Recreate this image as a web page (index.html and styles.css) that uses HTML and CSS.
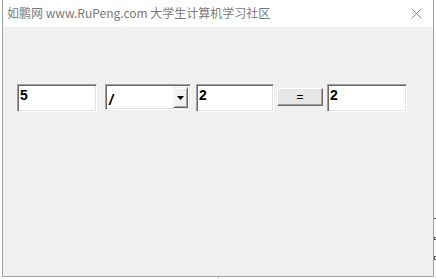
FILE: index.html
```html
<!DOCTYPE html>
<html lang="zh-CN">
<head>
    <meta charset="UTF-8">
    <meta name="viewport" content="width=device-width, initial-scale=1.0">
    <title>计算器</title>

    <link rel="stylesheet" href="styles.css">
</head>
<body>
    <div class="window">
        <div class="titlebar">
            <span class="title">如鹏网 www.RuPeng.com 大学生计算机学习社区</span>
            <span class="close">
                <svg width="11" height="11" viewBox="0 0 11 11">
                    <path d="M0.5 0.5 L10.5 10.5 M10.5 0.5 L0.5 10.5" stroke="#8a8a8a" stroke-width="1" fill="none"/>
                </svg>
            </span>
        </div>
        <div class="client">
            <div class="calc-row">
                <input class="textbox" id="num1" type="text" value="5">
                <div class="combo" id="op">
                    <span class="combo-text">/</span>
                    <span class="combo-btn">
                        <svg width="7" height="4" viewBox="0 0 7 4"><path d="M0 0 H7 L3.5 4 Z" fill="#000"/></svg>
                    </span>
                </div>
                <input class="textbox box3" id="num2" type="text" value="2">
                <button class="btn" id="calc">=</button>
                <input class="textbox box4" id="result" type="text" value="2">
            </div>
        </div>
    </div>

    <!-- bits of the desktop peeking out behind the window -->
    <span class="bit bit1"></span>
    <span class="bit bit2"></span>
    <span class="bit bit3"></span>
    <span class="bit bit4"></span>
</body>
</html>
```

FILE: styles.css
```css
*{
    margin: 0;
    padding: 0;
    box-sizing: border-box;
}
body{
    width: 436px;
    height: 279px;
    overflow: hidden;
    background-color: #ffffff;
    position: relative;
}
.window{
    margin-left: 2px;
    width: 432px;
    height: 277px;
    border: 1px solid #a0a0a0;
    border-top: none;
    background-color: #f0f0f0;
    display: flex;
    flex-direction: column;
}
.titlebar{
    height: 27px;
    background-color: #ffffff;
    display: flex;
    align-items: center;
    justify-content: space-between;
    padding: 0 11px 2px 4px;
}
.title{
    font-family: "Noto Sans CJK SC", "Noto Sans", sans-serif;
    font-size: 12px;
    color: #7a7a7a;
}
.close{
    display: flex;
    margin-top: 2px;
}
.client{
    flex: 1;
    padding: 57px 0 0 14px;
}
.calc-row{
    display: flex;
    align-items: flex-start;
}
.textbox{
    width: 80px;
    height: 28px;
    border: 1px solid;
    border-color: #a0a0a0 #ffffff #ffffff #a0a0a0;
    box-shadow: inset 1px 1px #696969, inset -1px -1px #e3e3e3;
    background-color: #ffffff;
    padding: 0 1px 6px 2px;
    font-family: "Liberation Sans", Arial, sans-serif;
    font-weight: bold;
    font-size: 14px;
    color: #000;
    outline: none;
}
.combo{
    width: 86px;
    height: 26px;
    margin-left: 8px;
    border: 1px solid;
    border-color: #a0a0a0 #ffffff #ffffff #a0a0a0;
    box-shadow: inset 1px 1px #696969, inset -1px -1px #e3e3e3;
    background-color: #ffffff;
    padding: 2px 2px 1px 3px;
    display: flex;
    justify-content: space-between;
}
.combo-text{
    font-family: "Liberation Sans", Arial, sans-serif;
    font-weight: bold;
    font-style: italic;
    font-size: 15px;
    line-height: 24px;
    padding-top: 1px;
}
.combo-btn{
    width: 15px;
    height: 21px;
    background-color: #f0f0f0;
    border: 1px solid;
    border-color: #f0f0f0 #696969 #696969 #f0f0f0;
    box-shadow: inset 1px 1px #ffffff, inset -1px -1px #a0a0a0;
    display: flex;
    align-items: center;
    justify-content: center;
}
.box3{
    width: 78px;
    margin-left: 5px;
}
.btn{
    width: 46px;
    height: 18px;
    margin: 4px 0 0 3px;
    background-color: #e6e6e6;
    border: 1px solid;
    border-color: #ffffff #696969 #696969 #ffffff;
    box-shadow: inset -1px -1px #a0a0a0;
    font-family: "Liberation Sans", Arial, sans-serif;
    font-size: 12px;
    color: #000;
    line-height: 14px;
}
.box4{
    margin-left: 4px;
}
.bit{
    position: absolute;
    background-color: #555;
}
.bit1{
    left: 434px;
    top: 218px;
    width: 2px;
    height: 1px;
}
.bit2{
    left: 434px;
    top: 237px;
    width: 2px;
    height: 3px;
    background-color: transparent;
    border: 1px solid #555;
    border-right: none;
}
.bit3{
    left: 434px;
    top: 256px;
    width: 2px;
    height: 4px;
    background-color: transparent;
    border: 1px solid #555;
    border-right: none;
}
.bit4{
    left: 218px;
    top: 277px;
    width: 1px;
    height: 2px;
    background-color: #c8c8c8;
}
```
